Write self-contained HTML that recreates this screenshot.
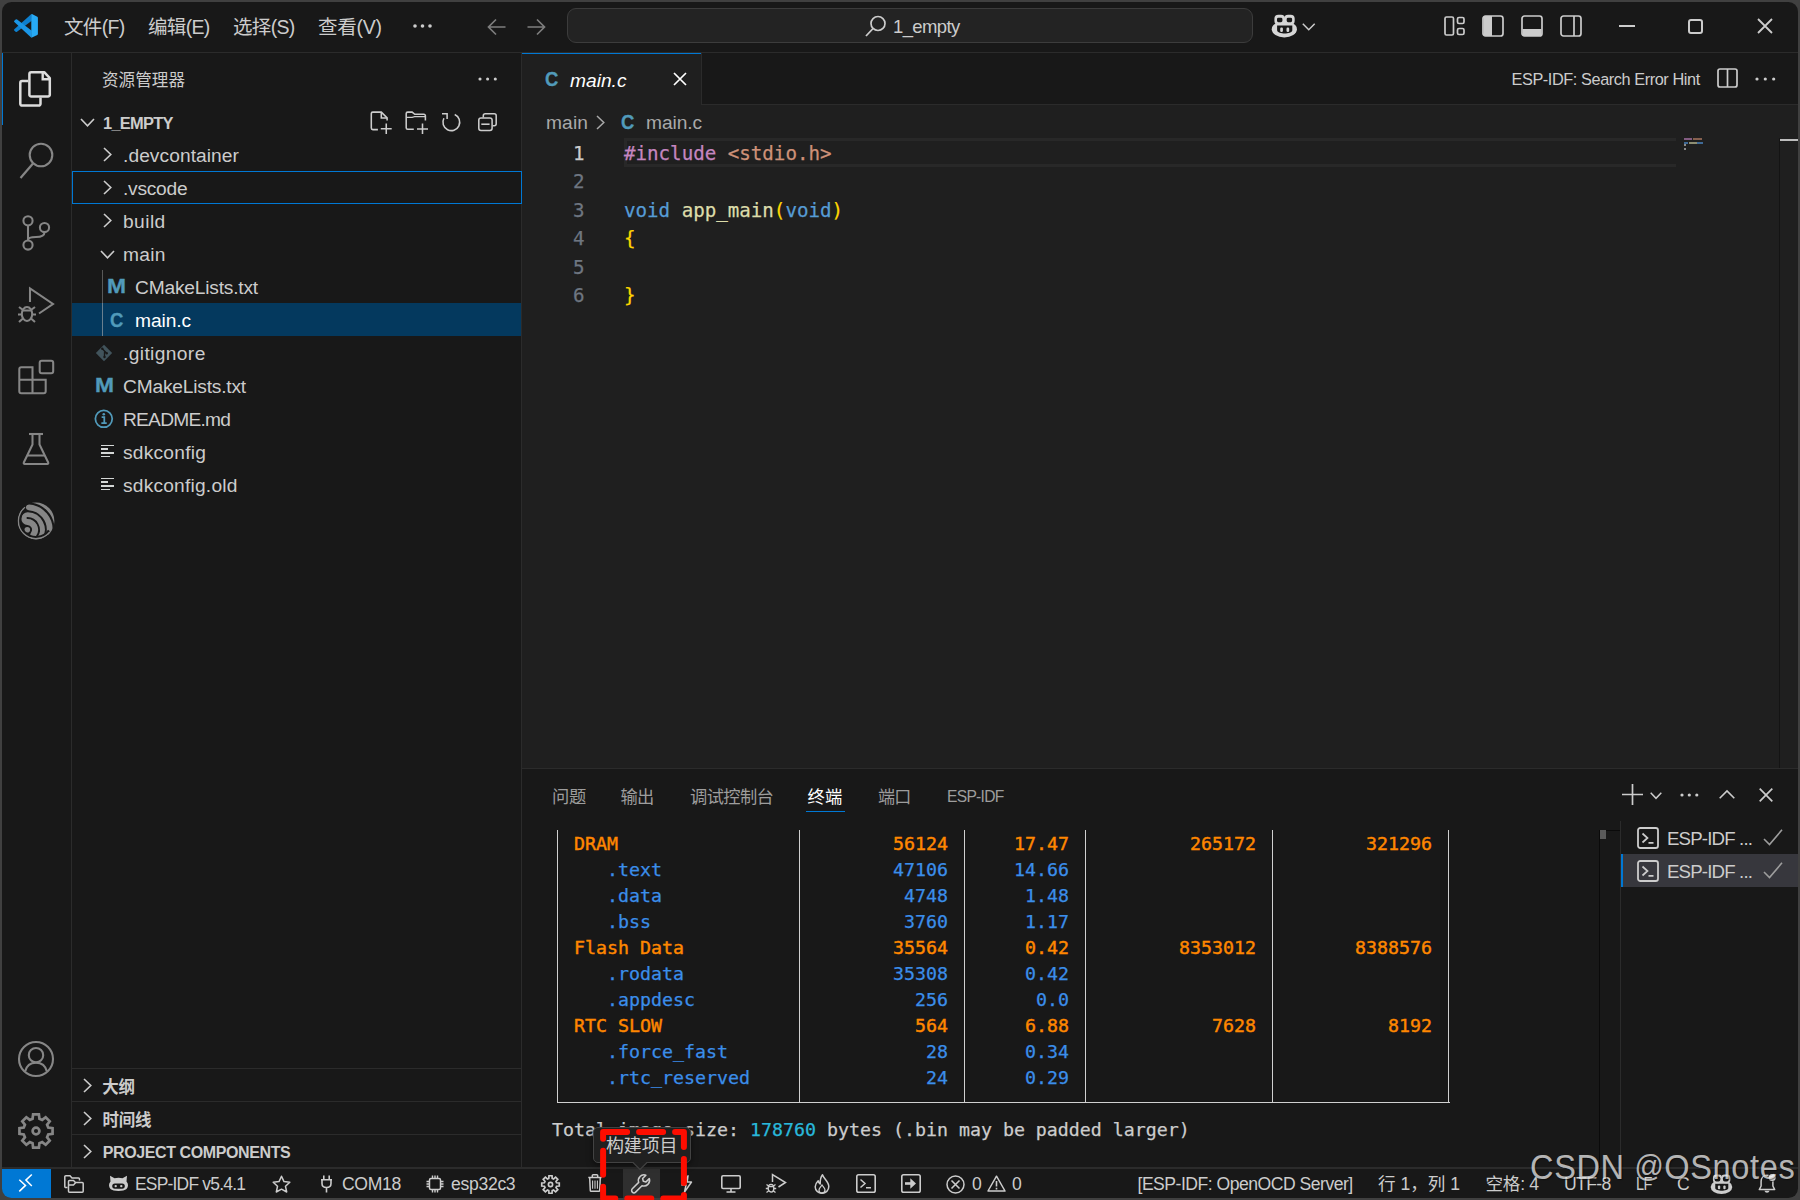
<!DOCTYPE html>
<html lang="zh-CN"><head><meta charset="utf-8"><title>main.c - 1_empty - Visual Studio Code</title>
<style>
*{box-sizing:border-box;margin:0;padding:0}
html,body{width:1800px;height:1200px;overflow:hidden;background:#181818}
body{font-family:"Liberation Sans","Noto Sans CJK SC",sans-serif;color:#cccccc;position:relative}
#win{position:absolute;left:0;top:0;width:1800px;height:1200px;background:#181818;overflow:hidden}
.b{position:absolute;display:block}
.t{position:absolute;white-space:pre;line-height:30px;height:30px;transform-origin:0 50%}
svg{overflow:visible;fill:none}
#frame{position:absolute;left:2px;top:2px;width:1795.8px;height:1195.6px;border-radius:9.5px;box-shadow:0 0 0 20px #404040;pointer-events:none}
.m{font-family:"Liberation Mono","Noto Sans CJK SC",monospace}
.d{font-family:"DejaVu Sans Mono","Noto Sans CJK SC",monospace}

</style></head>
<body>
<div id="win">
<div class="b" style="left:522px;top:53px;width:1278px;height:715px;background:#1f1f1f;"></div>
<div class="b" style="left:522px;top:53px;width:1278px;height:51px;background:#181818;"></div>
<div class="b" style="left:522px;top:104px;width:1278px;height:1px;background:#2b2b2b;"></div>
<div class="b" style="left:522px;top:53px;width:179px;height:52px;background:#1f1f1f;"></div>
<div class="b" style="left:522px;top:53px;width:179px;height:1px;background:#0078d4;"></div>
<div class="b" style="left:701px;top:53px;width:1px;height:51px;background:#2b2b2b;"></div>
<div class="b" style="left:0px;top:52px;width:1800px;height:1px;background:#2b2b2b;"></div>
<div class="b" style="left:71px;top:53px;width:1px;height:1114px;background:#2b2b2b;"></div>
<div class="b" style="left:521px;top:53px;width:1px;height:1114px;background:#2b2b2b;"></div>
<div class="b" style="left:522px;top:768px;width:1278px;height:1px;background:#2b2b2b;"></div>
<div class="b" style="left:0px;top:1167.2px;width:1800px;height:1.4px;background:#2b2b2b;"></div>
<svg class="b" style="left:12px;top:12px;" width="28" height="28" viewBox="12 12 28 28"><path d="M14.300 29.300Q13.700 30 14.300 30.600L15.600 31.800Q16.300 32.300 17 31.800L31.750 20.700L31.400 14Z" fill="#0d7fce"/>
<path d="M14.300 22Q13.700 21.400 14.300 20.800L15.700 19.600Q16.400 19.100 17.100 19.600L31.750 30.800L31.400 37.800Z" fill="#1b96e6"/>
<path d="M31.300 14.400Q31.300 13.700 32 14L37.300 16.700Q37.900 17.100 37.900 17.800V33.900Q37.900 34.600 37.300 34.900L32 37.600Q31.300 37.900 31.300 37.300Z" fill="#27a9f4"/></svg>
<div class="t" style="left:64.00px;top:12px;font-size:19.5px;color:#cccccc;letter-spacing:-0.646px;">文件(F)</div>
<div class="t" style="left:148.00px;top:12px;font-size:19.5px;color:#cccccc;letter-spacing:-0.667px;">编辑(E)</div>
<div class="t" style="left:233.00px;top:12px;font-size:19.5px;color:#cccccc;letter-spacing:-0.667px;">选择(S)</div>
<div class="t" style="left:318.00px;top:12px;font-size:19.5px;color:#cccccc;letter-spacing:-0.222px;">查看(V)</div>
<svg class="b" style="left:410.5px;top:22px;" width="23.0" height="8" viewBox="410.5 22 23.0 8"><circle cx="414.5" cy="26" r="1.8" fill="#cccccc"/><circle cx="422" cy="26" r="1.8" fill="#cccccc"/><circle cx="429.5" cy="26" r="1.8" fill="#cccccc"/></svg>
<svg class="b" style="left:486px;top:16px;" width="22" height="22" viewBox="0 0 22 22"><path d="M19.5 11H2.5M10 3.5L2.5 11L10 18.5" stroke="#7d7d7d" stroke-width="1.7"/></svg>
<svg class="b" style="left:525px;top:16px;" width="22" height="22" viewBox="0 0 22 22"><path d="M2.5 11H19.5M12 3.5L19.5 11L12 18.5" stroke="#7d7d7d" stroke-width="1.7"/></svg>
<div class="b" style="left:567px;top:8px;width:686px;height:35px;background:#232323;border:1px solid #3c3c3c;border-radius:9px"></div>
<svg class="b" style="left:864px;top:14px;" width="24" height="24" viewBox="0 0 24 24"><circle cx="14" cy="9.5" r="7" stroke="#cccccc" stroke-width="1.7"/><path d="M9 14.5L2 22" stroke="#cccccc" stroke-width="1.8"/></svg>
<div class="t" style="left:893.00px;top:12px;font-size:18.5px;color:#cccccc;letter-spacing:-0.611px;">1_empty</div>
<svg class="b" style="left:1271px;top:13px;" width="27.0" height="26.0" viewBox="0 0 27 26"><ellipse cx="13.35" cy="16.3" rx="12.6" ry="8.1" fill="#d6d6d6"/>
<path d="M6.100 12.500H21.300V17.300C21.300 19.400 17 20.500 13.700 20.500C10.400 20.500 6.100 19.400 6.100 17.300Z" fill="#181818"/>
<rect x="9.200" y="14.600" width="2.700" height="4.300" rx="1.200" fill="#d6d6d6"/>
<rect x="15.500" y="14.600" width="2.700" height="4.300" rx="1.200" fill="#d6d6d6"/>
<rect x="3.400" y="1.800" width="10.600" height="10" rx="4" fill="#d6d6d6"/>
<rect x="13.100" y="1.800" width="10.600" height="10" rx="4" fill="#d6d6d6"/>
<rect x="6.00" y="4.70" width="5.40" height="4.50" rx="1.40" fill="#181818"/>
<rect x="15.70" y="4.70" width="5.40" height="4.50" rx="1.40" fill="#181818"/></svg>
<svg class="b" style="left:1301.5px;top:22.5px;" width="13.5" height="8" viewBox="0 0 13.5 8"><path d="M0.800 0.800L6.750 6.700L12.700 0.800" stroke="#cccccc" stroke-width="1.5"/></svg>
<svg class="b" style="left:1444px;top:16px;" width="22" height="20" viewBox="0 0 22 20"><rect x="1" y="1" width="8.5" height="18" rx="1.5" stroke="#cccccc" stroke-width="1.7"/><rect x="13.5" y="1.5" width="6.5" height="6" rx="1.5" stroke="#cccccc" stroke-width="1.7"/><rect x="13.5" y="12.5" width="6.5" height="6" rx="1.5" stroke="#cccccc" stroke-width="1.7"/></svg>
<svg class="b" style="left:1482px;top:15px;" width="22" height="22" viewBox="0 0 22 22"><rect x="1" y="1" width="20" height="20" rx="2.5" stroke="#cccccc" stroke-width="1.7"/><path d="M1.5 3a2 2 0 0 1 2-2H10V21H3.5a2 2 0 0 1-2-2Z" fill="#cccccc"/></svg>
<svg class="b" style="left:1521px;top:15px;" width="22" height="22" viewBox="0 0 22 22"><rect x="1" y="1" width="20" height="20" rx="2.5" stroke="#cccccc" stroke-width="1.7"/><path d="M1.5 14H20.5V19a2 2 0 0 1-2 2H3.5a2 2 0 0 1-2-2Z" fill="#cccccc"/></svg>
<svg class="b" style="left:1560px;top:15px;" width="22" height="22" viewBox="0 0 22 22"><rect x="1" y="1" width="20" height="20" rx="2.5" stroke="#cccccc" stroke-width="1.7"/><path d="M14 1V21" stroke="#cccccc" stroke-width="1.7"/></svg>
<div class="b" style="left:1619px;top:25px;width:16px;height:2px;background:#cccccc;"></div>
<div class="b" style="left:1688px;top:19px;width:15px;height:15px;border:2px solid #cccccc;border-radius:3px"></div>
<svg class="b" style="left:1757px;top:18px;" width="16" height="16" viewBox="0 0 16 16"><path d="M1 1L15 15M15 1L1 15" stroke="#cccccc" stroke-width="1.8"/></svg>
<div class="b" style="left:2px;top:53px;width:1.2px;height:72px;background:#0078d4;"></div>
<svg class="b" style="left:16px;top:66px;" width="40" height="44" viewBox="16 66 40 44"><path d="M31.2 72.2H44.200L49.8 78.200V94.7A1.8 1.8 0 0 1 48.0 96.5H31.2A1.8 1.8 0 0 1 29.4 94.7V74.0A1.8 1.8 0 0 1 31.2 72.2Z" stroke="#dcdcdc" stroke-width="2.500" stroke-linejoin="round"/>
<path d="M42.700 72.500V79.300H49.600" stroke="#dcdcdc" stroke-width="2.400"/>
<path d="M28.200 81.1H22.1A1.8 1.8 0 0 0 20.3 82.89999999999999V103.8A1.8 1.8 0 0 0 22.1 105.6H38.7A1.8 1.8 0 0 0 40.5 103.8V97.500" stroke="#dcdcdc" stroke-width="2.500"/></svg>
<svg class="b" style="left:18px;top:140px;" width="36" height="40" viewBox="0 0 36 40"><circle cx="23" cy="15" r="11.3" stroke="#868686" stroke-width="2.1"/><path d="M15 23.5L2.5 38" stroke="#868686" stroke-width="2.2"/></svg>
<svg class="b" style="left:18px;top:213px;" width="36" height="40" viewBox="0 0 36 40">
<circle cx="10" cy="7.8" r="4.6" stroke="#868686" stroke-width="2.05"/>
<circle cx="10" cy="32" r="4.6" stroke="#868686" stroke-width="2.05"/>
<circle cx="26.5" cy="14.5" r="4.6" stroke="#868686" stroke-width="2.05"/>
<path d="M10 12.5V27.3M26.5 19.2C26.5 23 23 24 18 24C13 24 10 25 10 27.3" stroke="#868686" stroke-width="2.05"/>
</svg>
<svg class="b" style="left:16px;top:285px;" width="40" height="40" viewBox="0 0 40 40">
<path d="M14 17V3.5L37 19L23 28.5" stroke="#868686" stroke-width="2.05" stroke-linejoin="miter"/>
<ellipse cx="11" cy="29" rx="5.2" ry="7" stroke="#868686" stroke-width="2.05"/>
<path d="M6.5 25.5H15.5M2 29.5H6M16 29.5H20M3 22L7 25M19 22L15 25M3 37L7 33.5M19 37L15 33.5" stroke="#868686" stroke-width="2.1"/>
</svg>
<svg class="b" style="left:16px;top:356px;" width="42" height="42" viewBox="16 356 42 42"><path d="M19.300 369.300A2 2 0 0 1 21.300 367.300H32.500V379.700H45.700V391.200A2 2 0 0 1 43.700 393.200H21.300A2 2 0 0 1 19.300 391.200Z" stroke="#868686" stroke-width="2.050"/>
<path d="M19.300 379.700H32.500V393.200" stroke="#868686" stroke-width="2.050"/>
<rect x="39.700" y="360.700" width="13.500" height="12.500" rx="2" stroke="#868686" stroke-width="2.050"/></svg>
<svg class="b" style="left:22px;top:432px;" width="28" height="34" viewBox="0 0 28 34">
<path d="M7 2H21" stroke="#868686" stroke-width="2.1"/>
<path d="M10.5 2V12.5L1.8 30.5a1 1 0 0 0 .9 1.5H25.3a1 1 0 0 0 .9-1.5L17.5 12.5V2" stroke="#868686" stroke-width="2.05" stroke-linejoin="round"/>
<path d="M5.5 23.5H22.5" stroke="#868686" stroke-width="2.05"/>
</svg>
<svg class="b" style="left:17px;top:502px;" width="38" height="38" viewBox="0 0 38 38"><defs><clipPath id="espc"><circle cx="19" cy="19" r="18.4"/></clipPath></defs>
<g clip-path="url(#espc)">
<path d="M14.89 -4.98A33.0 33.0 0 0 1 42.98 23.11" stroke="#868686" stroke-width="11"/>
<path d="M11.86 5.35A22.4 22.4 0 0 1 32.53 30.43" stroke="#868686" stroke-width="5.8" stroke-linecap="round"/>
<path d="M10.69 16.61A11.1 11.1 0 0 1 19.50 33.91" stroke="#868686" stroke-width="12.8" stroke-linecap="round"/>
<path d="M9.69 16.02A11.7 11.7 0 0 1 19.77 34.58" stroke="#181818" stroke-width="1.8"/>
<circle cx="10.3" cy="27.7" r="2.8" fill="#868686"/>
<path d="M8.44 6.85A16.1 16.1 0 1 0 32.03 28.46" stroke="#181818" stroke-width="2.4"/>
<path d="M7.98 5.15A17.7 17.7 0 1 0 32.95 29.90" stroke="#868686" stroke-width="1.6"/>
</g></svg>
<svg class="b" style="left:17px;top:1040px;" width="38" height="38" viewBox="0 0 38 38">
<circle cx="19" cy="19" r="17" stroke="#868686" stroke-width="2.1"/>
<circle cx="19" cy="15.2" r="7.2" stroke="#868686" stroke-width="2.1"/>
<path d="M8.200 31.300C9.500 25.800 13.500 22.700 19 22.700C24.500 22.700 28.500 25.800 29.800 31.300" stroke="#868686" stroke-width="2.1"/>
</svg>
<svg class="b" style="left:17px;top:1112px" width="38" height="38" viewBox="-19.0 -19.0 38 38"><g transform="rotate(-90)"><path d="M12.22 -3.45L16.55 -2.89L16.55 2.89L12.22 3.45L11.08 6.21L13.74 9.66L9.66 13.74L6.21 11.08L3.45 12.22L2.89 16.55L-2.89 16.55L-3.45 12.22L-6.21 11.08L-9.66 13.74L-13.74 9.66L-11.08 6.21L-12.22 3.45L-16.55 2.89L-16.55 -2.89L-12.22 -3.45L-11.08 -6.21L-13.74 -9.66L-9.66 -13.74L-6.21 -11.08L-3.45 -12.22L-2.89 -16.55L2.89 -16.55L3.45 -12.22L6.21 -11.08L9.66 -13.74L13.74 -9.66L11.08 -6.21Z" stroke="#868686" stroke-width="2.7" stroke-linejoin="miter"/></g><circle cx="0" cy="0" r="3.4" stroke="#868686" stroke-width="2.7"/></svg>
<div class="t" style="left:102.00px;top:65px;font-size:16.5px;color:#cccccc;letter-spacing:0.111px;">资源管理器</div>
<svg class="b" style="left:476.2px;top:75.2px;" width="23.30000000000001" height="8" viewBox="476.2 75.2 23.30000000000001 8"><circle cx="480.2" cy="79.2" r="1.55" fill="#cccccc"/><circle cx="487.8" cy="79.2" r="1.55" fill="#cccccc"/><circle cx="495.5" cy="79.2" r="1.55" fill="#cccccc"/></svg>
<svg class="b" style="left:80px;top:118px;" width="15" height="9" viewBox="0 0 15 9"><path d="M1 1L7.5 7.8L14 1" stroke="#cccccc" stroke-width="1.6"/></svg>
<div class="t" style="left:103.00px;top:109px;font-size:16.8px;color:#cccccc;font-weight:700;letter-spacing:-0.756px;transform:scaleX(0.9781);">1_EMPTY</div>
<svg class="b" style="left:366px;top:108px;" width="30" height="30" viewBox="366 108 30 30"><path d="M377.900 129.600H372.800A1.500 1.500 0 0 1 371.300 128.100V113.600A1.500 1.500 0 0 1 372.800 112.100H381.300L387.100 117.900V120.600" stroke="#cccccc" stroke-width="1.55"/>
<path d="M381.300 112.300V117.900H387" stroke="#cccccc" stroke-width="1.55"/>
<path d="M380.800 128.750H391.700M386.250 123.500V134" stroke="#cccccc" stroke-width="1.55"/></svg>
<svg class="b" style="left:400px;top:108px;" width="32" height="30" viewBox="400 108 32 30"><path d="M413.800 129.200H407.700A1.500 1.500 0 0 1 406.200 127.700V113.600A1.500 1.500 0 0 1 407.700 112.100H412.100L414.800 114.300H423.900A1.500 1.500 0 0 1 425.400 115.800V120.600" stroke="#cccccc" stroke-width="1.55"/>
<path d="M406.300 117.300H412.100L414.700 116.600H425.200" stroke="#cccccc" stroke-width="1.3"/>
<path d="M417 129H428M422.500 123.500V134" stroke="#cccccc" stroke-width="1.55"/></svg>
<svg class="b" style="left:438px;top:108px;" width="28" height="30" viewBox="438 108 28 30"><path d="M454.72 114.53A8.4 8.4 0 1 1 443.88 118.26" stroke="#cccccc" stroke-width="1.55"/>
<path d="M442 113.750H447.100V119" stroke="#cccccc" stroke-width="1.55"/></svg>
<svg class="b" style="left:474px;top:108px;" width="28" height="30" viewBox="474 108 28 30"><rect x="478.800" y="117.900" width="13.300" height="12.500" rx="2.200" stroke="#cccccc" stroke-width="1.55"/>
<path d="M483.300 117.500V115.800A2 2 0 0 1 485.300 113.800H494.200A2 2 0 0 1 496.200 115.800V123.800A2 2 0 0 1 494.200 125.800H492.500" stroke="#cccccc" stroke-width="1.55"/>
<path d="M481.300 124.200H489.600" stroke="#cccccc" stroke-width="1.55"/></svg>
<svg class="b" style="left:103px;top:147px;" width="9" height="15" viewBox="0 0 9 15"><path d="M1 1L7.8 7.5L1 14" stroke="#cccccc" stroke-width="1.6"/></svg>
<div class="t" style="left:123.00px;top:141px;font-size:19.2px;color:#cccccc;letter-spacing:0.064px;">.devcontainer</div>
<div class="b" style="left:72px;top:171px;width:449.5px;height:33px;border:1px solid #0078d4"></div>
<svg class="b" style="left:103px;top:180px;" width="9" height="15" viewBox="0 0 9 15"><path d="M1 1L7.8 7.5L1 14" stroke="#cccccc" stroke-width="1.6"/></svg>
<div class="t" style="left:123.00px;top:174px;font-size:19.2px;color:#cccccc;letter-spacing:-0.252px;">.vscode</div>
<svg class="b" style="left:103px;top:213px;" width="9" height="15" viewBox="0 0 9 15"><path d="M1 1L7.8 7.5L1 14" stroke="#cccccc" stroke-width="1.6"/></svg>
<div class="t" style="left:123.00px;top:207px;font-size:19.2px;color:#cccccc;letter-spacing:0.434px;">build</div>
<svg class="b" style="left:100px;top:250px;" width="15" height="9" viewBox="0 0 15 9"><path d="M1 1L7.5 7.8L14 1" stroke="#cccccc" stroke-width="1.6"/></svg>
<div class="t" style="left:123.00px;top:240px;font-size:19.2px;color:#cccccc;letter-spacing:0.259px;">main</div>
<div class="b" style="left:102px;top:270px;width:1px;height:66px;background:#585858;"></div>
<div class="t" style="left:107.20px;top:271px;font-size:20px;color:#519aba;font-weight:700;transform:scaleX(1.1400);-webkit-text-stroke:0.35px;">M</div>
<div class="t" style="left:135.00px;top:273px;font-size:19.2px;color:#cccccc;letter-spacing:-0.209px;">CMakeLists.txt</div>
<div class="b" style="left:72px;top:303px;width:449px;height:33px;background:#04395e;"></div>
<div class="b" style="left:102px;top:303px;width:1px;height:33px;background:#6a7f8e;"></div>
<div class="t" style="left:110.00px;top:305px;font-size:20.5px;color:#519aba;font-weight:700;transform:scaleX(0.9000);-webkit-text-stroke:0.3px;">C</div>
<div class="t" style="left:135.00px;top:306px;font-size:19.2px;color:#ffffff;letter-spacing:-0.094px;">main.c</div>
<svg class="b" style="left:95px;top:344px;" width="18" height="18" viewBox="0 0 18 18"><path d="M9 0.800L17.200 9L9 17.200L0.800 9Z" fill="#41535b"/><path d="M7.500 5L11.500 9M9.500 7V13" stroke="#181818" stroke-width="1.300"/><circle cx="7.300" cy="4.800" r="1.200" fill="#181818"/><circle cx="11.700" cy="9.200" r="1.200" fill="#181818"/><circle cx="9.500" cy="13" r="1.200" fill="#181818"/></svg>
<div class="t" style="left:123.00px;top:339px;font-size:19.2px;color:#cccccc;letter-spacing:0.375px;">.gitignore</div>
<div class="t" style="left:94.60px;top:370px;font-size:20px;color:#519aba;font-weight:700;transform:scaleX(1.1400);-webkit-text-stroke:0.35px;">M</div>
<div class="t" style="left:123.00px;top:372px;font-size:19.2px;color:#cccccc;letter-spacing:-0.209px;">CMakeLists.txt</div>
<svg class="b" style="left:94.2px;top:409px;" width="19.6" height="19.6" viewBox="0 0 20 20"><circle cx="10" cy="10" r="8.600" stroke="#519aba" stroke-width="1.800"/><path d="M7.800 8.300H10.500V14.300M7.500 14.500H13" stroke="#519aba" stroke-width="1.800"/><circle cx="10" cy="5.300" r="1.300" fill="#519aba"/></svg>
<div class="t" style="left:123.00px;top:405px;font-size:19.2px;color:#cccccc;letter-spacing:-0.774px;">README.md</div>
<div class="b" style="left:101px;top:444.5px;width:12.7px;height:1.7px;background:#d4d7d6;"></div>
<div class="b" style="left:101px;top:448.17px;width:7.2px;height:1.7px;background:#d4d7d6;"></div>
<div class="b" style="left:101px;top:451.84px;width:12.7px;height:1.7px;background:#d4d7d6;"></div>
<div class="b" style="left:101px;top:455.51px;width:9.2px;height:1.7px;background:#d4d7d6;"></div>
<div class="b" style="left:101px;top:477.5px;width:12.7px;height:1.7px;background:#d4d7d6;"></div>
<div class="b" style="left:101px;top:481.17px;width:7.2px;height:1.7px;background:#d4d7d6;"></div>
<div class="b" style="left:101px;top:484.84px;width:12.7px;height:1.7px;background:#d4d7d6;"></div>
<div class="b" style="left:101px;top:488.51px;width:9.2px;height:1.7px;background:#d4d7d6;"></div>
<div class="t" style="left:123.00px;top:438px;font-size:19.2px;color:#cccccc;letter-spacing:0.228px;">sdkconfig</div>
<div class="t" style="left:123.00px;top:471px;font-size:19.2px;color:#cccccc;letter-spacing:0.200px;">sdkconfig.old</div>
<div class="b" style="left:72px;top:1068px;width:449px;height:1px;background:#2b2b2b;"></div>
<div class="b" style="left:72px;top:1101px;width:449px;height:1px;background:#2b2b2b;"></div>
<div class="b" style="left:72px;top:1134px;width:449px;height:1px;background:#2b2b2b;"></div>
<svg class="b" style="left:83px;top:1078px;" width="9" height="15" viewBox="0 0 9 15"><path d="M1 1L7.8 7.5L1 14" stroke="#cccccc" stroke-width="1.6"/></svg>
<div class="t" style="left:102.20px;top:1072px;font-size:16.5px;color:#cccccc;font-weight:700;letter-spacing:-0.133px;">大纲</div>
<svg class="b" style="left:83px;top:1111px;" width="9" height="15" viewBox="0 0 9 15"><path d="M1 1L7.8 7.5L1 14" stroke="#cccccc" stroke-width="1.6"/></svg>
<div class="t" style="left:102.50px;top:1105px;font-size:16.5px;color:#cccccc;font-weight:700;letter-spacing:-0.200px;">时间线</div>
<svg class="b" style="left:83px;top:1144px;" width="9" height="15" viewBox="0 0 9 15"><path d="M1 1L7.8 7.5L1 14" stroke="#cccccc" stroke-width="1.6"/></svg>
<div class="t" style="left:102.70px;top:1138px;font-size:16px;color:#cccccc;font-weight:700;letter-spacing:-0.388px;">PROJECT COMPONENTS</div>
<div class="t" style="left:545.30px;top:64px;font-size:20.5px;color:#519aba;font-weight:700;transform:scaleX(0.9000);-webkit-text-stroke:0.3px;">C</div>
<div class="t" style="left:570.00px;top:66px;font-size:19.2px;color:#ffffff;font-style:italic;letter-spacing:-0.003px;">main.c</div>
<svg class="b" style="left:673px;top:72px;" width="14" height="14" viewBox="0 0 14 14"><path d="M1 1L13 13M13 1L1 13" stroke="#ffffff" stroke-width="1.700"/></svg>
<div class="t" style="left:1511.50px;top:64px;font-size:16.3px;color:#cccccc;letter-spacing:-0.414px;">ESP-IDF: Search Error Hint</div>
<svg class="b" style="left:1717px;top:68px;" width="21" height="20" viewBox="0 0 21 20"><rect x="1" y="1" width="19" height="18" rx="2" stroke="#cccccc" stroke-width="1.700"/><path d="M10.500 1V19" stroke="#cccccc" stroke-width="1.700"/></svg>
<svg class="b" style="left:1753px;top:74.8px;" width="24.700000000000045" height="8" viewBox="1753 74.8 24.700000000000045 8"><circle cx="1757" cy="78.8" r="1.6" fill="#cccccc"/><circle cx="1765.3" cy="78.8" r="1.6" fill="#cccccc"/><circle cx="1773.7" cy="78.8" r="1.6" fill="#cccccc"/></svg>
<div class="t" style="left:546.00px;top:108px;font-size:19.2px;color:#a9a9a9;letter-spacing:0.116px;">main</div>
<svg class="b" style="left:596px;top:114.5px;" width="9" height="15" viewBox="0 0 9 15"><path d="M1 1L7.8 7.5L1 14" stroke="#a9a9a9" stroke-width="1.5"/></svg>
<div class="t" style="left:620.80px;top:107px;font-size:20.5px;color:#519aba;font-weight:700;transform:scaleX(0.9000);-webkit-text-stroke:0.3px;">C</div>
<div class="t" style="left:646.00px;top:108px;font-size:19.2px;color:#a9a9a9;letter-spacing:-0.094px;">main.c</div>
<div class="b" style="left:624px;top:138px;width:1052px;height:28.5px;border:3px solid #282828;border-right:none"></div>
<div class="t d" style="left:573.00px;top:139px;font-size:19.18px;color:#cccccc;-webkit-text-stroke:0.25px;">1</div>
<div class="t d" style="left:573.00px;top:167px;font-size:19.18px;color:#6e7681;-webkit-text-stroke:0.25px;">2</div>
<div class="t d" style="left:573.00px;top:196px;font-size:19.18px;color:#6e7681;-webkit-text-stroke:0.25px;">3</div>
<div class="t d" style="left:573.00px;top:224px;font-size:19.18px;color:#6e7681;-webkit-text-stroke:0.25px;">4</div>
<div class="t d" style="left:573.00px;top:253px;font-size:19.18px;color:#6e7681;-webkit-text-stroke:0.25px;">5</div>
<div class="t d" style="left:573.00px;top:281px;font-size:19.18px;color:#6e7681;-webkit-text-stroke:0.25px;">6</div>
<div class="t d" style="left:624.00px;top:139px;font-size:19.18px;color:#cccccc;letter-spacing:-0.016px;-webkit-text-stroke:0.25px;"><span style="color:#c586c0">#include</span> <span style="color:#ce9178">&lt;stdio.h&gt;</span></div>
<div class="t d" style="left:624.00px;top:196px;font-size:19.18px;color:#cccccc;letter-spacing:-0.018px;-webkit-text-stroke:0.25px;"><span style="color:#569cd6">void</span> <span style="color:#dcdcaa">app_main</span><span style="color:#ffd700">(</span><span style="color:#569cd6">void</span><span style="color:#ffd700">)</span></div>
<div class="t d" style="left:624.00px;top:224px;font-size:19.18px;color:#ffd700;-webkit-text-stroke:0.25px;">{</div>
<div class="t d" style="left:624.00px;top:281px;font-size:19.18px;color:#ffd700;-webkit-text-stroke:0.25px;">}</div>
<div class="b" style="left:1684px;top:138px;width:8px;height:2px;background:#835c82;"></div>
<div class="b" style="left:1693px;top:138px;width:9px;height:2px;background:#86604f;"></div>
<div class="b" style="left:1684px;top:142px;width:4px;height:2px;background:#3f6a96;"></div>
<div class="b" style="left:1689px;top:142px;width:8px;height:2px;background:#8e8e72;"></div>
<div class="b" style="left:1697px;top:142px;width:6px;height:2px;background:#3f6a96;"></div>
<div class="b" style="left:1684px;top:144px;width:1.5px;height:2px;background:#8a8a8a;"></div>
<div class="b" style="left:1684px;top:148px;width:1.5px;height:2px;background:#8a8a8a;"></div>
<div class="b" style="left:1779px;top:138px;width:1px;height:630px;background:#141414;"></div>
<div class="b" style="left:1780px;top:138.5px;width:18px;height:2.5px;background:#bdbdbd;"></div>
<div class="t" style="left:552.00px;top:782px;font-size:17.3px;color:#9d9d9d;letter-spacing:-0.385px;">问题</div>
<div class="t" style="left:620.50px;top:782px;font-size:17.3px;color:#9d9d9d;letter-spacing:-0.719px;">输出</div>
<div class="t" style="left:690.00px;top:782px;font-size:17.3px;color:#9d9d9d;letter-spacing:-0.649px;">调试控制台</div>
<div class="t" style="left:807.50px;top:782px;font-size:17.3px;color:#ffffff;letter-spacing:0.281px;">终端</div>
<div class="b" style="left:806px;top:811px;width:39px;height:1.2px;background:#0078d4;"></div>
<div class="t" style="left:877.50px;top:782px;font-size:17.3px;color:#9d9d9d;letter-spacing:-0.778px;transform:scaleX(0.9877);">端口</div>
<div class="t" style="left:947.00px;top:781px;font-size:16.3px;color:#9d9d9d;letter-spacing:-0.734px;transform:scaleX(0.9585);">ESP-IDF</div>
<svg class="b" style="left:1622px;top:784px;" width="21" height="21" viewBox="0 0 21 21"><path d="M10.500 0V21M0 10.500H21" stroke="#cccccc" stroke-width="1.700"/></svg>
<svg class="b" style="left:1650px;top:791.5px;" width="12" height="8" viewBox="0 0 12 8"><path d="M0.700 0.800L6 6.300L11.300 0.800" stroke="#cccccc" stroke-width="1.500"/></svg>
<svg class="b" style="left:1677.6px;top:791.1px;" width="22.800000000000182" height="8" viewBox="1677.6 791.1 22.800000000000182 8"><circle cx="1681.6" cy="795.1" r="1.6" fill="#cccccc"/><circle cx="1688.9" cy="795.1" r="1.6" fill="#cccccc"/><circle cx="1696.4" cy="795.1" r="1.6" fill="#cccccc"/></svg>
<svg class="b" style="left:1719px;top:790px;" width="16" height="9" viewBox="0 0 16 9"><path d="M0.700 8.300L8 1L15.300 8.300" stroke="#cccccc" stroke-width="1.600"/></svg>
<svg class="b" style="left:1758.5px;top:788px;" width="14" height="14" viewBox="0 0 14 14"><path d="M0.700 0.700L13.300 13.300M13.300 0.700L0.700 13.300" stroke="#cccccc" stroke-width="1.700"/></svg>
<div class="b" style="left:556.6px;top:830px;width:1.8px;height:273px;background:#d0d0d0;"></div>
<div class="b" style="left:798.6px;top:830px;width:1.8px;height:273px;background:#d0d0d0;"></div>
<div class="b" style="left:963.6px;top:830px;width:1.8px;height:273px;background:#d0d0d0;"></div>
<div class="b" style="left:1084.6px;top:830px;width:1.8px;height:273px;background:#d0d0d0;"></div>
<div class="b" style="left:1271.6px;top:830px;width:1.8px;height:273px;background:#d0d0d0;"></div>
<div class="b" style="left:1447.6px;top:830px;width:1.8px;height:273px;background:#d0d0d0;"></div>
<div class="b" style="left:557px;top:1101.6px;width:892.5px;height:1.8px;background:#d0d0d0;"></div>
<div class="t d" style="left:574.00px;top:829px;font-size:18.27px;color:#ff8700;-webkit-text-stroke:0.42px #ff8700;">DRAM</div>
<div class="t d" style="left:893.00px;top:829px;font-size:18.27px;color:#ff8700;-webkit-text-stroke:0.42px #ff8700;">56124</div>
<div class="t d" style="left:1014.00px;top:829px;font-size:18.27px;color:#ff8700;-webkit-text-stroke:0.42px #ff8700;">17.47</div>
<div class="t d" style="left:1190.00px;top:829px;font-size:18.27px;color:#ff8700;-webkit-text-stroke:0.42px #ff8700;">265172</div>
<div class="t d" style="left:1366.00px;top:829px;font-size:18.27px;color:#ff8700;-webkit-text-stroke:0.42px #ff8700;">321296</div>
<div class="t d" style="left:607.00px;top:855px;font-size:18.27px;color:#3b8eea;-webkit-text-stroke:0.25px;">.text</div>
<div class="t d" style="left:893.00px;top:855px;font-size:18.27px;color:#3b8eea;-webkit-text-stroke:0.25px;">47106</div>
<div class="t d" style="left:1014.00px;top:855px;font-size:18.27px;color:#3b8eea;-webkit-text-stroke:0.25px;">14.66</div>
<div class="t d" style="left:607.00px;top:881px;font-size:18.27px;color:#3b8eea;-webkit-text-stroke:0.25px;">.data</div>
<div class="t d" style="left:904.00px;top:881px;font-size:18.27px;color:#3b8eea;-webkit-text-stroke:0.25px;">4748</div>
<div class="t d" style="left:1025.00px;top:881px;font-size:18.27px;color:#3b8eea;-webkit-text-stroke:0.25px;">1.48</div>
<div class="t d" style="left:607.00px;top:907px;font-size:18.27px;color:#3b8eea;-webkit-text-stroke:0.25px;">.bss</div>
<div class="t d" style="left:904.00px;top:907px;font-size:18.27px;color:#3b8eea;-webkit-text-stroke:0.25px;">3760</div>
<div class="t d" style="left:1025.00px;top:907px;font-size:18.27px;color:#3b8eea;-webkit-text-stroke:0.25px;">1.17</div>
<div class="t d" style="left:574.00px;top:933px;font-size:18.27px;color:#ff8700;-webkit-text-stroke:0.42px #ff8700;">Flash Data</div>
<div class="t d" style="left:893.00px;top:933px;font-size:18.27px;color:#ff8700;-webkit-text-stroke:0.42px #ff8700;">35564</div>
<div class="t d" style="left:1025.00px;top:933px;font-size:18.27px;color:#ff8700;-webkit-text-stroke:0.42px #ff8700;">0.42</div>
<div class="t d" style="left:1179.00px;top:933px;font-size:18.27px;color:#ff8700;-webkit-text-stroke:0.42px #ff8700;">8353012</div>
<div class="t d" style="left:1355.00px;top:933px;font-size:18.27px;color:#ff8700;-webkit-text-stroke:0.42px #ff8700;">8388576</div>
<div class="t d" style="left:607.00px;top:959px;font-size:18.27px;color:#3b8eea;-webkit-text-stroke:0.25px;">.rodata</div>
<div class="t d" style="left:893.00px;top:959px;font-size:18.27px;color:#3b8eea;-webkit-text-stroke:0.25px;">35308</div>
<div class="t d" style="left:1025.00px;top:959px;font-size:18.27px;color:#3b8eea;-webkit-text-stroke:0.25px;">0.42</div>
<div class="t d" style="left:607.00px;top:985px;font-size:18.27px;color:#3b8eea;-webkit-text-stroke:0.25px;">.appdesc</div>
<div class="t d" style="left:915.00px;top:985px;font-size:18.27px;color:#3b8eea;-webkit-text-stroke:0.25px;">256</div>
<div class="t d" style="left:1036.00px;top:985px;font-size:18.27px;color:#3b8eea;-webkit-text-stroke:0.25px;">0.0</div>
<div class="t d" style="left:574.00px;top:1011px;font-size:18.27px;color:#ff8700;-webkit-text-stroke:0.42px #ff8700;">RTC SLOW</div>
<div class="t d" style="left:915.00px;top:1011px;font-size:18.27px;color:#ff8700;-webkit-text-stroke:0.42px #ff8700;">564</div>
<div class="t d" style="left:1025.00px;top:1011px;font-size:18.27px;color:#ff8700;-webkit-text-stroke:0.42px #ff8700;">6.88</div>
<div class="t d" style="left:1212.00px;top:1011px;font-size:18.27px;color:#ff8700;-webkit-text-stroke:0.42px #ff8700;">7628</div>
<div class="t d" style="left:1388.00px;top:1011px;font-size:18.27px;color:#ff8700;-webkit-text-stroke:0.42px #ff8700;">8192</div>
<div class="t d" style="left:607.00px;top:1037px;font-size:18.27px;color:#3b8eea;-webkit-text-stroke:0.25px;">.force_fast</div>
<div class="t d" style="left:926.00px;top:1037px;font-size:18.27px;color:#3b8eea;-webkit-text-stroke:0.25px;">28</div>
<div class="t d" style="left:1025.00px;top:1037px;font-size:18.27px;color:#3b8eea;-webkit-text-stroke:0.25px;">0.34</div>
<div class="t d" style="left:607.00px;top:1063px;font-size:18.27px;color:#3b8eea;-webkit-text-stroke:0.25px;">.rtc_reserved</div>
<div class="t d" style="left:926.00px;top:1063px;font-size:18.27px;color:#3b8eea;-webkit-text-stroke:0.25px;">24</div>
<div class="t d" style="left:1025.00px;top:1063px;font-size:18.27px;color:#3b8eea;-webkit-text-stroke:0.25px;">0.29</div>
<div class="t d" style="left:552.00px;top:1115px;font-size:18.27px;color:#cccccc;-webkit-text-stroke:0.25px;">Total image size: <span style="color:#29b8db">178760</span> bytes (.bin may be padded larger)</div>
<div class="b" style="left:1599px;top:830px;width:1px;height:338px;background:#0a0a0a;"></div>
<div class="b" style="left:1599px;top:830px;width:21px;height:1px;background:#0a0a0a;"></div>
<div class="b" style="left:1600px;top:830px;width:6px;height:9px;background:#5a5a5a;"></div>
<div class="b" style="left:1620px;top:821px;width:1px;height:346px;background:#2b2b2b;"></div>
<div class="b" style="left:1621px;top:854px;width:177px;height:33px;background:#37373d;"></div>
<div class="b" style="left:1621px;top:854px;width:2px;height:33px;background:#0078d4;"></div>
<svg class="b" style="left:1637px;top:827px;" width="22" height="22" viewBox="0 0 22 22"><rect x="1" y="1" width="20" height="20" rx="2.300" stroke="#cccccc" stroke-width="1.800"/><path d="M5.500 6.500L10.500 11L5.500 15.500M11.500 15.800H16.500" stroke="#cccccc" stroke-width="1.700"/></svg>
<div class="t" style="left:1666.50px;top:824px;font-size:19.2px;color:#cccccc;letter-spacing:-0.864px;transform:scaleX(0.9722);">ESP-IDF ...</div>
<svg class="b" style="left:1763px;top:829px;" width="20" height="17" viewBox="0 0 20 17"><path d="M1 10L6.500 15.500L19 0.800" stroke="#9d9d9d" stroke-width="1.600"/></svg>
<svg class="b" style="left:1637px;top:860px;" width="22" height="22" viewBox="0 0 22 22"><rect x="1" y="1" width="20" height="20" rx="2.300" stroke="#cccccc" stroke-width="1.800"/><path d="M5.500 6.500L10.500 11L5.500 15.500M11.500 15.800H16.500" stroke="#cccccc" stroke-width="1.700"/></svg>
<div class="t" style="left:1666.50px;top:857px;font-size:19.2px;color:#cccccc;letter-spacing:-0.864px;transform:scaleX(0.9722);">ESP-IDF ...</div>
<svg class="b" style="left:1763px;top:862px;" width="20" height="17" viewBox="0 0 20 17"><path d="M1 10L6.500 15.500L19 0.800" stroke="#9d9d9d" stroke-width="1.600"/></svg>
<div class="b" style="left:2px;top:1168.6px;width:49px;height:30px;background:#0078d4;"></div>
<svg class="b" style="left:14px;top:1170px;" width="24" height="26" viewBox="14 1170 24 26"><path d="M19.300 1179.800L25.500 1185.400L19.300 1191.400M31.800 1174.500L25.900 1180.100L31.800 1186" stroke="#ffffff" stroke-width="1.500"/></svg>
<svg class="b" style="left:64px;top:1175px;" width="20" height="18" viewBox="0 0 20 18"><path d="M3.500 12.500H1.800A1 1 0 0 1 0.800 11.500V1.800A1 1 0 0 1 1.800 0.800H6L8 3H14.500A1 1 0 0 1 15.500 4V5.500" stroke="#cccccc" stroke-width="1.500"/><path d="M4.500 6.500A1 1 0 0 1 5.500 5.500H9.500L11.500 7.500H18.200A1 1 0 0 1 19.200 8.500V16.200A1 1 0 0 1 18.200 17.200H5.500A1 1 0 0 1 4.500 16.200Z" stroke="#cccccc" stroke-width="1.500"/><path d="M4.500 10H9.500L11.500 7.800" stroke="#cccccc" stroke-width="1.400"/></svg>
<svg class="b" style="left:108px;top:1175px;" width="21" height="17" viewBox="0 0 21 17"><path d="M2.500 6.500L2 0.800L6.500 3.200C9 2.500 12 2.500 14.500 3.200L19 0.800L18.500 6.500C20.500 8.500 20.500 12 18.500 14C16 16.500 5 16.500 2.500 14C0.500 12 0.500 8.500 2.500 6.500Z" fill="#cccccc"/><rect x="4.200" y="8.500" width="12.600" height="5.200" rx="2.600" fill="#181818"/><circle cx="7.700" cy="11.100" r="1.200" fill="#cccccc"/><circle cx="13.300" cy="11.100" r="1.200" fill="#cccccc"/></svg>
<div class="t" style="left:135.00px;top:1169px;font-size:17.6px;color:#cccccc;letter-spacing:-0.792px;transform:scaleX(0.9907);">ESP-IDF v5.4.1</div>
<svg class="b" style="left:272px;top:1175px;" width="19" height="18" viewBox="0 0 19 18"><path d="M9.500 1.300L12 6.600L17.800 7.300L13.500 11.300L14.700 17L9.500 14.200L4.300 17L5.500 11.300L1.200 7.300L7 6.600Z" stroke="#cccccc" stroke-width="1.500" stroke-linejoin="round"/></svg>
<svg class="b" style="left:320px;top:1175px;" width="13" height="18" viewBox="0 0 13 18"><path d="M3.800 0.500V4.500M9.200 0.500V4.500M1 4.800H12M2 5V8.500C2 11 4 12.500 6.500 12.500C9 12.500 11 11 11 8.500V5M6.500 12.500V17.500" stroke="#cccccc" stroke-width="1.600"/></svg>
<div class="t" style="left:342.00px;top:1169px;font-size:17.6px;color:#cccccc;letter-spacing:-0.361px;">COM18</div>
<svg class="b" style="left:426px;top:1175px;" width="18" height="18" viewBox="0 0 18 18"><rect x="3.500" y="3.500" width="11" height="11" rx="1.500" stroke="#cccccc" stroke-width="1.500"/><path d="M6.500 0.500V3.500M9 0.500V3.500M11.500 0.500V3.500M6.500 14.500V17.500M9 14.500V17.500M11.500 14.500V17.500M0.500 6.500H3.500M0.500 9H3.500M0.500 11.500H3.500M14.500 6.500H17.500M14.500 9H17.500M14.500 11.500H17.500" stroke="#cccccc" stroke-width="1.400"/></svg>
<div class="t" style="left:451.00px;top:1169px;font-size:17.6px;color:#cccccc;letter-spacing:-0.312px;">esp32c3</div>
<svg class="b" style="left:541px;top:1174.5px" width="19" height="19" viewBox="-9.5 -9.5 19 19"><g transform="rotate(-90)"><path d="M6.06 -1.71L8.77 -1.53L8.77 1.53L6.06 1.71L5.50 3.08L7.28 5.12L5.12 7.28L3.08 5.50L1.71 6.06L1.53 8.77L-1.53 8.77L-1.71 6.06L-3.08 5.50L-5.12 7.28L-7.28 5.12L-5.50 3.08L-6.06 1.71L-8.77 1.53L-8.77 -1.53L-6.06 -1.71L-5.50 -3.08L-7.28 -5.12L-5.12 -7.28L-3.08 -5.50L-1.71 -6.06L-1.53 -8.77L1.53 -8.77L1.71 -6.06L3.08 -5.50L5.12 -7.28L7.28 -5.12L5.50 -3.08Z" stroke="#cccccc" stroke-width="1.7" stroke-linejoin="miter"/></g><circle cx="0" cy="0" r="2.1" stroke="#cccccc" stroke-width="1.7"/></svg>
<svg class="b" style="left:588px;top:1174px;" width="14" height="18" viewBox="0 0 14 18"><path d="M0.300 3.600H13.700M4.300 3.500V1.600A0.900 0.900 0 0 1 5.200 0.700H8.800A0.900 0.900 0 0 1 9.700 1.600V3.500M1.700 3.800L2.300 16.400A0.900 0.900 0 0 0 3.200 17.300H10.800A0.900 0.900 0 0 0 11.700 16.400L12.300 3.800" stroke="#cccccc" stroke-width="1.500"/><path d="M4.600 6.500V14.700M7 6.500V14.700M9.400 6.500V14.700" stroke="#cccccc" stroke-width="1.100"/></svg>
<div class="b" style="left:623px;top:1168.6px;width:36.5px;height:30px;background:#2f2f2f;"></div>
<svg class="b" style="left:631px;top:1174px;" width="20" height="20" viewBox="0 0 20 20"><path d="M18.300 4.600L15 7.900L12.300 7.200L11.600 4.500L14.900 1.200C12.800 0.500 10.500 1 9 2.600C7.400 4.200 7 6.400 7.700 8.400L1.300 14.800C0.400 15.700 0.400 17.200 1.300 18.100C2.200 19 3.700 19 4.600 18.100L11 11.700C13 12.400 15.300 12 16.900 10.400C18.500 8.900 19 6.600 18.300 4.600Z" stroke="#cccccc" stroke-width="1.500" stroke-linejoin="round"/></svg>
<svg class="b" style="left:680px;top:1175px;" width="13" height="18" viewBox="0 0 13 18"><path d="M8 0.800L2 10H6L4.500 17.200L11.500 7H7.200L8 0.800Z" stroke="#cccccc" stroke-width="1.500" stroke-linejoin="round"/></svg>
<svg class="b" style="left:721px;top:1175px;" width="20" height="18" viewBox="0 0 20 18"><rect x="0.800" y="0.800" width="18.400" height="12.700" rx="1.200" stroke="#cccccc" stroke-width="1.600"/><path d="M10 13.500V16.800M5.500 17H14.500" stroke="#cccccc" stroke-width="1.600"/></svg>
<svg class="b" style="left:765px;top:1173px;" width="22" height="21" viewBox="0 0 22 21"><path d="M7.500 9V1.500L20.500 9.500L13.500 14" stroke="#cccccc" stroke-width="1.500"/><ellipse cx="6" cy="15.200" rx="2.800" ry="3.800" stroke="#cccccc" stroke-width="1.400"/><path d="M3.500 13.500H8.500M0.800 15.500H3.200M8.800 15.500H11.200M1.500 11.500L3.600 13M10.500 11.500L8.400 13M1.500 19.500L3.700 17.800M10.500 19.500L8.300 17.800" stroke="#cccccc" stroke-width="1.300"/></svg>
<svg class="b" style="left:814px;top:1174px;" width="16" height="20" viewBox="0 0 16 20"><path d="M8.500 0.800C9.500 4.500 14.800 7.500 14.800 12.500C14.800 16.500 11.800 19.200 8 19.200C4.200 19.200 1.200 16.500 1.200 12.800C1.200 10 2.800 8.200 4.200 6.800C4.500 8.500 5.200 9.500 6.200 10C6 6.500 6.800 3 8.500 0.800Z" stroke="#cccccc" stroke-width="1.500" stroke-linejoin="round"/><path d="M8 19C6 19 5 17.500 5 16C5 14 6.800 13 8 11C9.200 13 11 14 11 16C11 17.500 10 19 8 19Z" stroke="#cccccc" stroke-width="1.300"/></svg>
<svg class="b" style="left:856px;top:1174px;" width="20" height="19" viewBox="0 0 20 19"><rect x="0.800" y="0.800" width="18.400" height="17.400" rx="1.800" stroke="#cccccc" stroke-width="1.600"/><path d="M4.500 5.500L9 9.500L4.500 13.500M10 13.800H15" stroke="#cccccc" stroke-width="1.500"/></svg>
<svg class="b" style="left:901px;top:1174px;" width="20" height="19" viewBox="0 0 20 19"><rect x="0.800" y="0.800" width="18.400" height="17.400" rx="1.800" stroke="#cccccc" stroke-width="1.600"/><path d="M4 9.500H11" stroke="#cccccc" stroke-width="2.600"/><path d="M9.300 4.300L15 9.500L9.300 14.700Z" fill="#cccccc"/></svg>
<svg class="b" style="left:946px;top:1174.5px;" width="19" height="19" viewBox="0 0 19 19"><circle cx="9.500" cy="9.500" r="8.500" stroke="#cccccc" stroke-width="1.500"/><path d="M5.500 5.500L13.500 13.500M13.500 5.500L5.500 13.500" stroke="#cccccc" stroke-width="1.600"/></svg>
<div class="t" style="left:972.00px;top:1169px;font-size:17.6px;color:#cccccc;">0</div>
<svg class="b" style="left:987px;top:1175px;" width="19" height="17" viewBox="0 0 19 17"><path d="M9.500 1.200L18 16H1Z" stroke="#cccccc" stroke-width="1.500" stroke-linejoin="round"/><path d="M9.500 6V11.500M9.500 12.800V14.500" stroke="#cccccc" stroke-width="1.600"/></svg>
<div class="t" style="left:1012.00px;top:1169px;font-size:17.6px;color:#cccccc;">0</div>
<div class="t" style="left:1137.50px;top:1169px;font-size:17.6px;color:#cccccc;letter-spacing:-0.503px;">[ESP-IDF: OpenOCD Server]</div>
<div class="t" style="left:1378.00px;top:1169px;font-size:17.6px;color:#cccccc;letter-spacing:-0.022px;">行 1，列 1</div>
<div class="t" style="left:1485.50px;top:1169px;font-size:17.6px;color:#cccccc;letter-spacing:-0.278px;">空格: 4</div>
<div class="t" style="left:1564.00px;top:1169px;font-size:17.6px;color:#cccccc;letter-spacing:-0.632px;">UTF-8</div>
<div class="t" style="left:1636.00px;top:1169px;font-size:17.6px;color:#cccccc;letter-spacing:-0.792px;transform:scaleX(0.8265);">LF</div>
<div class="t" style="left:1677.00px;top:1169px;font-size:17.6px;color:#cccccc;">C</div>
<svg class="b" style="left:1710.4px;top:1172.75px;" width="23.2" height="22.4" viewBox="0 0 27 26"><ellipse cx="13.35" cy="16.3" rx="12.6" ry="8.1" fill="#cccccc"/>
<path d="M6.100 12.500H21.300V17.300C21.300 19.400 17 20.500 13.700 20.500C10.400 20.500 6.100 19.400 6.100 17.300Z" fill="#181818"/>
<rect x="9.200" y="14.600" width="2.700" height="4.300" rx="1.200" fill="#cccccc"/>
<rect x="15.500" y="14.600" width="2.700" height="4.300" rx="1.200" fill="#cccccc"/>
<rect x="3.400" y="1.800" width="10.600" height="10" rx="4" fill="#cccccc"/>
<rect x="13.100" y="1.800" width="10.600" height="10" rx="4" fill="#cccccc"/>
<rect x="5.40" y="4.10" width="6.60" height="5.70" rx="2.00" fill="#181818"/>
<rect x="15.10" y="4.10" width="6.60" height="5.70" rx="2.00" fill="#181818"/></svg>
<svg class="b" style="left:1756px;top:1172px;" width="24" height="24" viewBox="1756 1172 24 24"><path d="M1759.300 1189.600H1774.700L1772.900 1186V1181.500C1772.900 1177.800 1770.300 1175.300 1767 1175.300C1763.700 1175.300 1761.100 1177.800 1761.100 1181.500V1186Z" stroke="#cccccc" stroke-width="1.500" stroke-linejoin="round"/>
<path d="M1764.400 1190.800A2.700 2.700 0 0 0 1769.600 1190.800Z" fill="#cccccc"/>
<circle cx="1772.200" cy="1177.400" r="4.200" fill="#181818"/><circle cx="1772.200" cy="1177.400" r="3.500" fill="#d4d4d4"/></svg>
<div id="frame"></div>
<div class="b" style="left:593.3px;top:1127.3px;width:97.5px;height:35.6px;background:#202020;border:1.2px solid #424242;border-radius:5px;box-shadow:0 2px 6px rgba(0,0,0,0.5)"></div>
<svg class="b" style="left:633px;top:1161.5px;" width="14" height="8" viewBox="0 0 14 8"><path d="M0 0L7 7.300L14 0Z" fill="#202020"/><path d="M0 0.500L7 7.500L14 0.500" stroke="#424242" stroke-width="1.2"/></svg>
<div class="t" style="left:606.00px;top:1131px;font-size:18px;color:#cccccc;letter-spacing:-0.143px;">构建项目</div>
<svg class="b" style="left:0px;top:0px;pointer-events:none" width="1800" height="1200" viewBox="0 0 1800 1200"><path d="M603.1 1131.9H683.9V1198.5H603.1Z" stroke="#fe0d00" stroke-width="6" stroke-dasharray="24 12" stroke-linecap="round" stroke-linejoin="round"/></svg>
<div class="t" style="left:1529.50px;top:1152px;font-size:35px;color:rgba(255,255,255,0.70);letter-spacing:0.668px;transform:scaleX(0.9300);text-shadow:1px 1px 1px rgba(0,0,0,0.45);">CSDN <span style="font-size:31px;position:relative;top:-2.5px">@</span>OSnotes</div>
</div>
</body></html>
